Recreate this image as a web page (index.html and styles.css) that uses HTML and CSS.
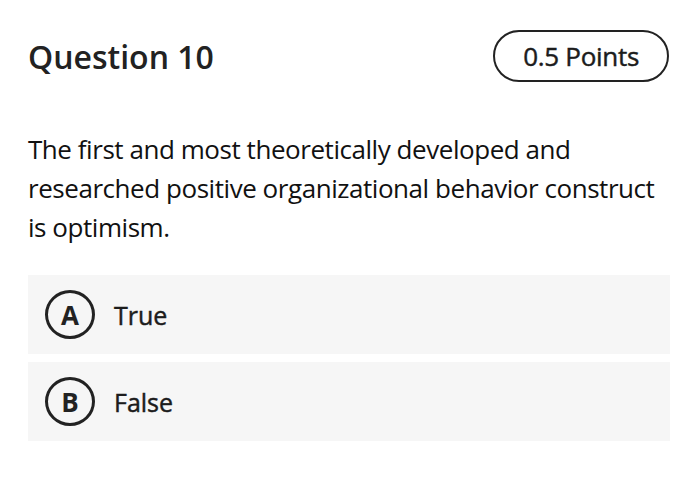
FILE: index.html
```html
<!DOCTYPE html>
<html>
<head>
<meta charset="utf-8">
<link rel="stylesheet" href="styles.css">
</head>
<body>
<div class="page">
  <div class="header">
    <h1 class="title">Question 10</h1>
    <div class="points">0.5 Points</div>
  </div>
  <p class="question">The first and most theoretically developed and researched positive organizational behavior construct is optimism.</p>
  <div class="options">
    <div class="option"><span class="letter">A</span><span class="label">True</span></div>
    <div class="option"><span class="letter">B</span><span class="label">False</span></div>
  </div>
</div>
</body>
</html>
```
FILE: styles.css
```css
html, body { margin: 0; padding: 0; background: #fff; }
body { font-family: "Open Sans", sans-serif; color: #1f1f1f; }
.page { width: 700px; height: 482px; padding: 30px 30px 0 28px; box-sizing: border-box; }
.header { display: flex; justify-content: space-between; align-items: center; height: 52px; }
.title { margin: 0; font-size: 32px; font-weight: 600; letter-spacing: 0; color: #222; }
.points { height: 52px; box-sizing: border-box; border: 2px solid #222; border-radius: 26px; padding: 0 28px; display: flex; align-items: center; font-size: 26px; font-weight: 400; letter-spacing: -0.3px; color: #1c1c1c; -webkit-text-stroke: 0.45px #1c1c1c; margin-right: 1px; }
.question { margin: 48px 0 0 0; font-size: 26px; line-height: 39px; color: #111; letter-spacing: -0.45px; }
.options { margin-top: 28px; display: flex; flex-direction: column; gap: 8px; }
.option { height: 79px; background: #f6f6f6; display: flex; align-items: center; padding-left: 17px; }
.letter { width: 50px; height: 49px; box-sizing: border-box; border: 3px solid #222; border-radius: 50%; display: flex; align-items: center; justify-content: center; font-size: 26px; font-weight: 700; color: #222; }
.label { margin-left: 19px; font-size: 25px; font-weight: 400; color: #1c1c1c; -webkit-text-stroke: 0.45px #1c1c1c; }
```
